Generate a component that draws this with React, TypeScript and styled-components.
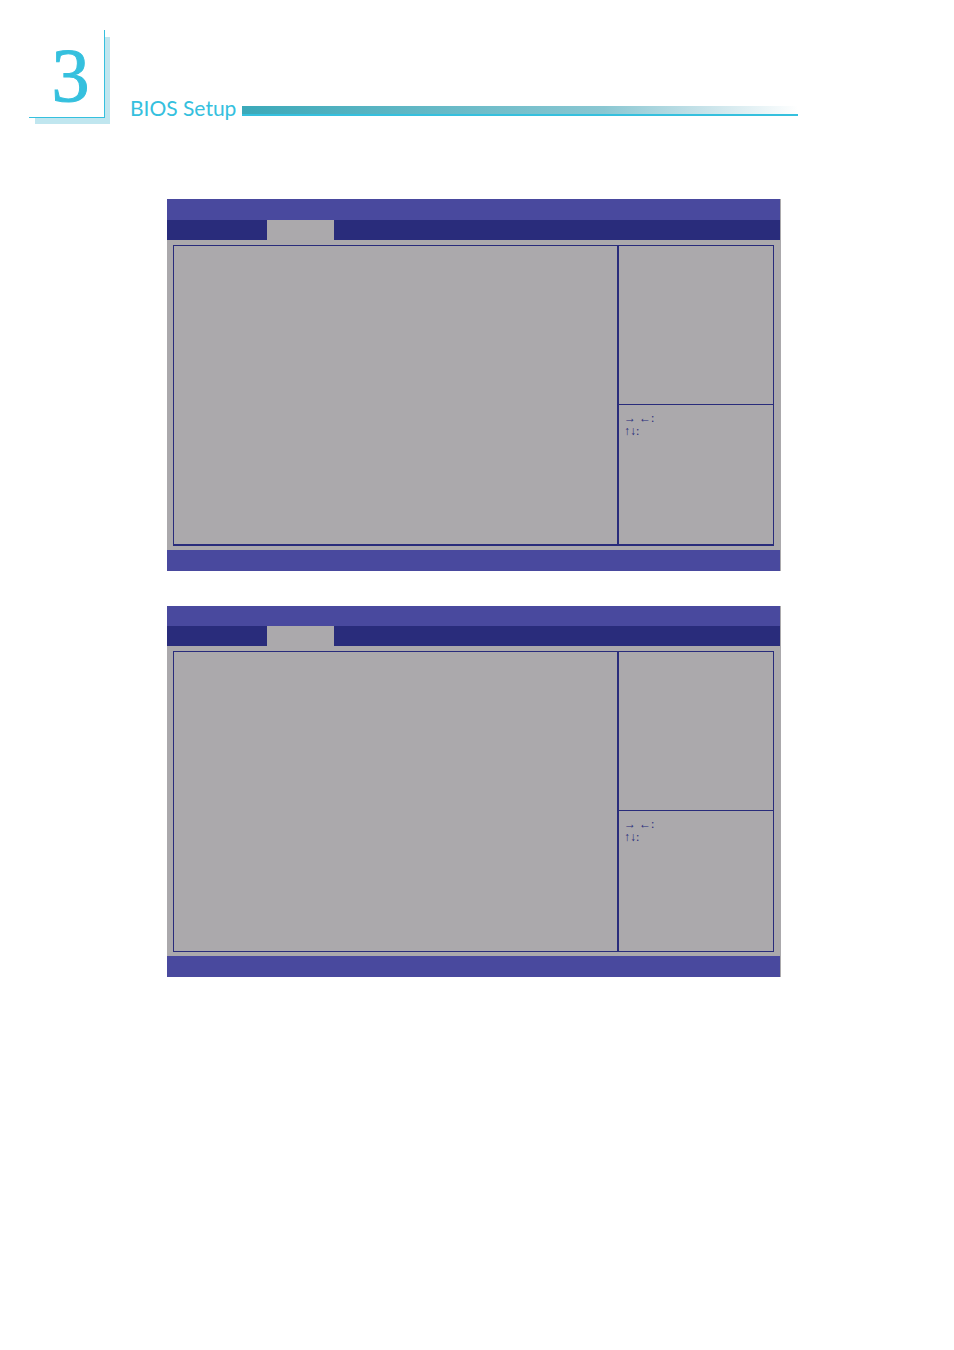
import React from "react";
import styled, { createGlobalStyle } from "styled-components";

const colors = {
  cyan: "#35c0de",
  cyanPale: "#c0e6ef",
  title: "#49499e",
  nav: "#292c7b",
  grey: "#aba9ac",
};

const GlobalStyle = createGlobalStyle`
  *, *::before, *::after { box-sizing: border-box; }
  body {
    margin: 0;
    background: #fff;
    font-family: Lato, sans-serif;
  }
`;

const Page = styled.div`
  min-height: 100vh;
`;

const Header = styled.header`
  display: flex;
  align-items: flex-start;
  padding: 30px 156px 0 29px;
`;

const ChapterTab = styled.div`
  position: relative;
  flex: none;
  width: 76px;
  height: 88px;

  &::before {
    content: "";
    position: absolute;
    inset: 7px -5px -6px 6px;
    background: ${colors.cyanPale};
  }
`;

const ChapterNumber = styled.div`
  position: relative;
  height: 100%;
  padding-left: 8px;
  border-right: 1px solid ${colors.cyan};
  border-bottom: 1px solid ${colors.cyan};
  background: #fff;
  color: ${colors.cyan};
  font: 76px/90px "Liberation Serif", serif;
  -webkit-text-stroke: 1px ${colors.cyan};
  text-align: center;
`;

const Title = styled.h1`
  flex: none;
  width: 112px;
  margin: 64px 0 0 25px;
  color: ${colors.cyan};
  font-size: 21px;
  font-weight: 400;
  line-height: 28px;
  white-space: nowrap;
`;

const TitleRule = styled.div`
  flex: 1;
  height: 10px;
  margin-top: 76px;
  border-bottom: 2px solid ${colors.cyan};
  background: linear-gradient(to right, #3ba9b9, #8ac7d2 65%, #c4e1e8 82%, #fff);
`;

const Main = styled.main`
  display: flex;
  flex-direction: column;
  gap: 35px;
  padding: 77px 173px 0 167px;
`;

const Screen = styled.section`
  background: ${colors.grey};
`;

const TitleBar = styled.div<{ $height: number }>`
  height: ${(p) => p.$height}px;
  margin-right: 1px;
  background: ${colors.title};
`;

const NavBar = styled.div`
  display: flex;
  height: 20px;
  margin-right: 1px;
  padding-left: 100px;
  background: ${colors.nav};
`;

const ActiveTab = styled.div`
  width: 67px;
  background: ${colors.grey};
`;

const Frame = styled.div<{ $bottom: number }>`
  display: grid;
  grid-template-columns: 1fr 156px;
  height: 301px;
  margin: 5px 7px 4px 6px;
  border: 1px solid ${colors.nav};
  border-bottom-width: ${(p) => p.$bottom}px;
`;

const Options = styled.div``;

const Side = styled.div`
  display: flex;
  flex-direction: column;
  border-left: 2px solid ${colors.nav};
`;

const Help = styled.div`
  height: 159px;
  border-bottom: 1px solid ${colors.nav};
`;

const Keys = styled.div`
  padding: 7px 5px;
  color: ${colors.nav};
  font: 12px/13px "Liberation Serif", serif;
`;

const KeyLine = styled.div``;

function BiosScreen({ titleHeight, frameBottom }: { titleHeight: number; frameBottom: number }) {
  return (
    <Screen>
      <TitleBar $height={titleHeight} />
      <NavBar>
        <ActiveTab />
      </NavBar>
      <Frame $bottom={frameBottom}>
        <Options />
        <Side>
          <Help />
          <Keys>
            <KeyLine>→ ←:</KeyLine>
            <KeyLine>↑↓:</KeyLine>
          </Keys>
        </Side>
      </Frame>
      <TitleBar $height={21} />
    </Screen>
  );
}

export default function App() {
  return (
    <Page>
      <GlobalStyle />
      <Header>
        <ChapterTab>
          <ChapterNumber>3</ChapterNumber>
        </ChapterTab>
        <Title>BIOS Setup</Title>
        <TitleRule />
      </Header>
      <Main>
        <BiosScreen titleHeight={21} frameBottom={2} />
        <BiosScreen titleHeight={20} frameBottom={1} />
      </Main>
    </Page>
  );
}
